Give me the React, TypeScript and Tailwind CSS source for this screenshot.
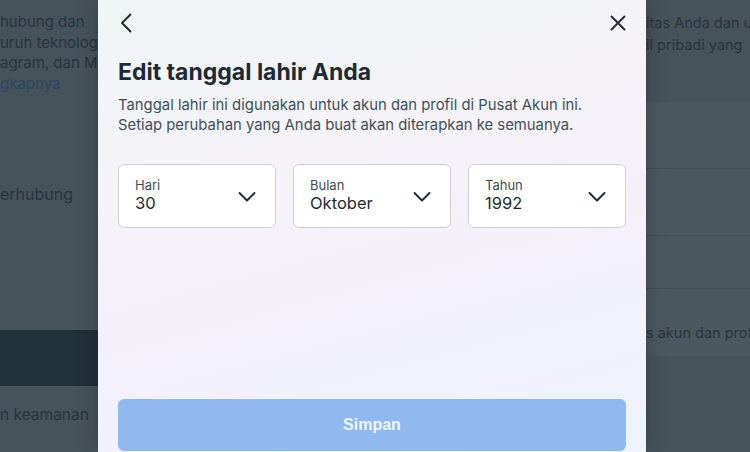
import React from "react";

function ChevronDown() {
  return (
    <svg width="24" height="24" viewBox="0 0 24 24" fill="none" className="shrink-0">
      <path d="M4.5 9L12 16.5L19.5 9" stroke="#1c2b33" strokeWidth="1.9" strokeLinecap="round" strokeLinejoin="round" />
    </svg>
  );
}

function SelectBox({ label, value }: { label: string; value: string }) {
  return (
    <div className="flex h-[64px] flex-1 items-center justify-between rounded-[6px] border border-[#ccd0d5] bg-white pl-[16px] pr-[16px]">
      <div className="flex flex-col pb-[3px]">
        <span className="text-[13px] leading-[16px] text-[#3e4b55]">{label}</span>
        <span className="text-[16.5px] leading-[20px] text-[#1c2b33]">{value}</span>
      </div>
      <ChevronDown />
    </div>
  );
}

export default function App() {
  return (
    <div className="relative h-[452px] w-[750px] overflow-hidden bg-[#47535b] font-['Inter','Noto_Sans',sans-serif]">
      {/* Background page (dimmed) */}
      <div className="flex h-full w-full">
        <div className="flex w-[98px] shrink-0 flex-col overflow-hidden whitespace-nowrap text-[#28353e]">
          <div className="flex flex-col pt-[12px] text-[15px] leading-[20.5px]">
            <span>hubung dan</span>
            <span>uruh teknologi</span>
            <span>agram, dan Meta</span>
            <span className="text-[#2b4766]">gkapnya</span>
          </div>
          <div className="mt-[90px] text-[16px] leading-[20px]">erhubung</div>
          <div className="mt-[126px] h-[56px] bg-[#21313a]" />
          <div className="mt-[19px] text-[15.5px] leading-[20px]">n keamanan</div>
        </div>
        <div className="w-[548px] shrink-0" />
        <div className="flex flex-1 flex-col overflow-hidden whitespace-nowrap text-[#28353e]">
          <div className="flex h-[102px] flex-col pt-[12px] text-[14.5px] leading-[22px]">
            <span>itas Anda dan u</span>
            <span>il pribadi yang</span>
          </div>
          <div className="flex flex-col bg-[#4c5860]">
            <div className="h-[67px] border-b border-[#434e56]" />
            <div className="h-[67px] border-b border-[#434e56]" />
            <div className="h-[53px] border-b border-[#434e56]" />
            <div className="flex h-[67px] items-end pb-[13px] text-[14.5px] leading-[20px]">
              <span>s akun dan profil</span>
            </div>
          </div>
        </div>
      </div>

      {/* Modal overlay */}
      <div className="absolute inset-0 flex pl-[98px]">
        <div className="flex h-[452px] w-[548px] flex-col bg-[linear-gradient(165deg,#f0f5f6_0%,#f5f3f8_35%,#f4f0fa_55%,#eef3fc_100%)] px-[20px] shadow-[0_0_18px_rgba(0,0,0,0.28)]">
          <div className="flex h-[46px] items-center justify-between">
            <svg width="14" height="20" viewBox="0 0 14 20" fill="none" className="ml-[1px]">
              <path d="M11.5 1.5L3 10L11.5 18.5" stroke="#1c2b33" strokeWidth="1.9" strokeLinecap="round" strokeLinejoin="round" />
            </svg>
            <svg width="16" height="16" viewBox="0 0 16 16" fill="none" className="mb-[1px]">
              <path d="M1.5 1.5L14.5 14.5M14.5 1.5L1.5 14.5" stroke="#1c2b33" strokeWidth="1.9" strokeLinecap="round" />
            </svg>
          </div>
          <h1 className="mt-[12px] text-[23px] font-bold leading-[28px] text-[#1c2b33]">
            Edit tanggal lahir Anda
          </h1>
          <p className="mt-[9px] text-[14.85px] leading-[20px] text-[#3f4f5a]">
            Tanggal lahir ini digunakan untuk akun dan profil di Pusat Akun ini.
            <br />
            Setiap perubahan yang Anda buat akan diterapkan ke semuanya.
          </p>
          <div className="mt-[29px] flex gap-[17px]">
            <SelectBox label="Hari" value="30" />
            <SelectBox label="Bulan" value="Oktober" />
            <SelectBox label="Tahun" value="1992" />
          </div>
          <div className="mt-auto mb-[1px] flex h-[52px] items-center justify-center rounded-[6px] bg-[#8fb9ef]">
            <span className="font-['Liberation_Sans',Arial,sans-serif] text-[16px] font-bold text-[#eef5fe]">Simpan</span>
          </div>
        </div>
      </div>
    </div>
  );
}
